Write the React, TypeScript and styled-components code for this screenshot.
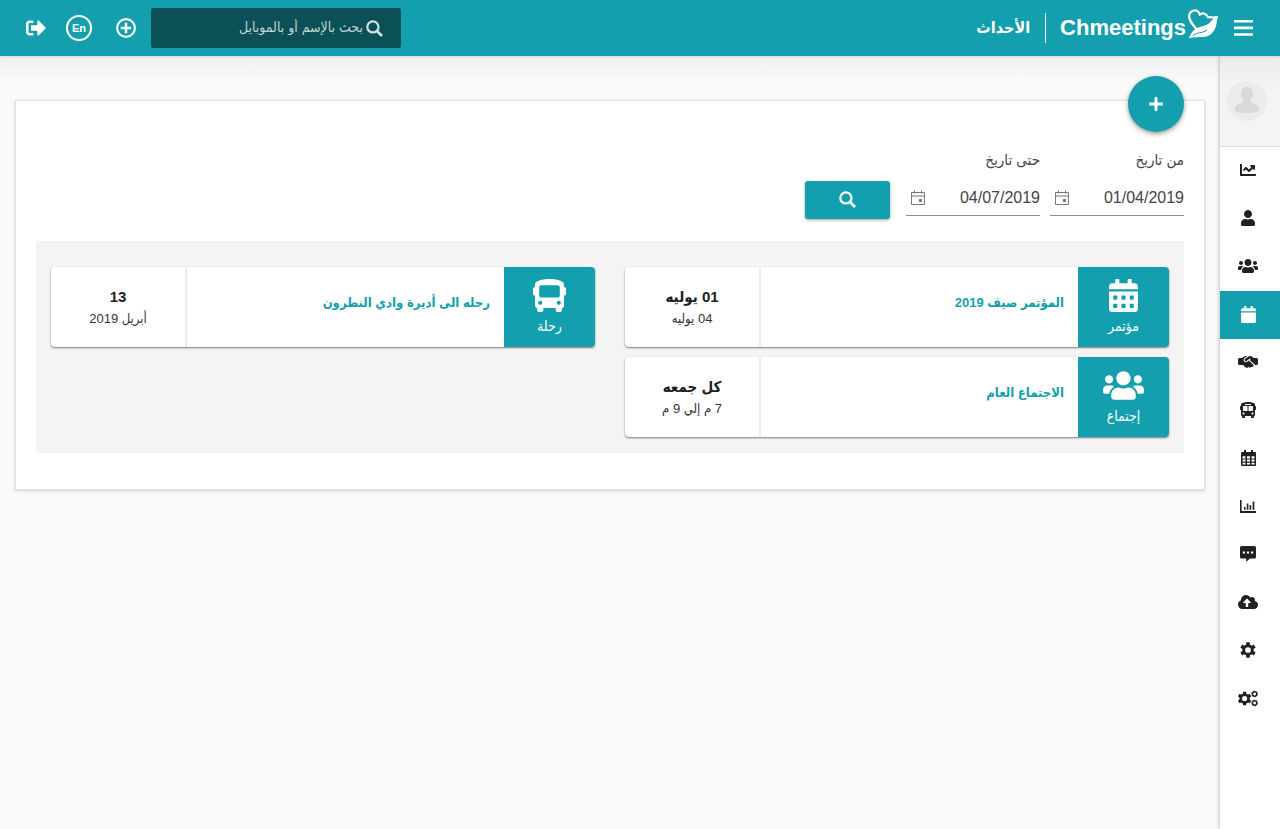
import React from "react";
import styled, { createGlobalStyle } from "styled-components";
import {
  FaBus,
  FaBusAlt,
  FaCalendar,
  FaCalendarAlt,
  FaChartLine,
  FaCloudUploadAlt,
  FaPlus,
  FaSignOutAlt,
  FaUser,
  FaUsers,
} from "react-icons/fa";
import { FaHandshakeSimple } from "react-icons/fa6";

const teal = "#139fad";

const GlobalStyle = createGlobalStyle`
  *, *::before, *::after { box-sizing: border-box; }
  body {
    margin: 0;
    background: #fafafa;
    color: #212121;
    font-family: "Liberation Sans", Arial, "DejaVu Sans Condensed", "DejaVu Sans", sans-serif;
    font-size: 14px;
    line-height: 20px;
  }
  button, input { font: inherit; color: inherit; }
  a { color: inherit; text-decoration: none; }
  svg { display: block; flex: none; }
`;

const Shell = styled.div`
  display: flex;
  flex-direction: column;
  min-height: 100vh;
`;

const TopBar = styled.header`
  position: relative;
  z-index: 2;
  display: flex;
  align-items: center;
  height: 56px;
  padding: 0 27px 0 26px;
  background: ${teal};
  color: #fff;
  box-shadow: 0 1px 2px rgba(0, 0, 0, 0.1);
`;

const IconButton = styled.button`
  display: flex;
  padding: 0;
  border: 0;
  background: none;
  color: #fff;
  cursor: pointer;
`;

const Brand = styled.a`
  display: flex;
  align-items: center;
  gap: 2px;
  margin-right: 15px;
`;

const BrandName = styled.span`
  font-size: 22px;
  font-weight: 700;
  line-height: 28px;
`;

const PageTitle = styled.h1`
  display: flex;
  align-items: center;
  height: 30px;
  margin: 0 14px 0 0;
  padding-right: 15px;
  border-right: 1px solid #fff;
  font-size: 16px;
  font-weight: 700;
`;

const Tools = styled.div`
  display: flex;
  align-items: center;
  gap: 15px;
  margin-right: auto;
`;

const Actions = styled.div`
  display: flex;
  align-items: center;
  gap: 20px;
`;

const SearchBox = styled.label`
  display: flex;
  align-items: center;
  gap: 3px;
  width: 250px;
  height: 40px;
  padding: 0 18px;
  border-radius: 2px;
  background: #0a5056;
  color: #d3dfe0;
`;

const SearchInput = styled.input`
  flex: 1;
  min-width: 0;
  padding: 0 0 2px;
  border: 0;
  outline: 0;
  background: none;
  font-size: 14px;
  &::placeholder { color: #c3d2d4; opacity: 1; }
`;

const LanguageButton = styled(IconButton)`
  align-items: center;
  justify-content: center;
  width: 26px;
  height: 26px;
  margin-right: 4px;
  border: 2px solid #fff;
  border-radius: 50%;
  font-size: 11px;
  font-weight: 700;
`;

const Body = styled.div`
  display: flex;
  flex: 1;
`;

const SideNav = styled.nav`
  position: relative;
  z-index: 1;
  flex: none;
  width: 60px;
  background: #fff;
  box-shadow: 0 0 4px rgba(0, 0, 0, 0.35);
`;

const Profile = styled.a`
  display: flex;
  align-items: center;
  justify-content: center;
  height: 91px;
  padding-right: 6px;
  border-bottom: 1px solid #dcdcdc;
  background: linear-gradient(#ebebeb, #f4f4f4 30px);
`;

const NavList = styled.ul`
  margin: 0;
  padding: 0;
  list-style: none;
`;

const NavLink = styled.a<{ $active?: boolean }>`
  display: flex;
  align-items: center;
  justify-content: center;
  height: 48px;
  padding: 0 4px 2px 0;
  background: ${(p) => (p.$active ? teal : "transparent")};
  color: ${(p) => (p.$active ? "#fff" : "#212121")};
`;

const Main = styled.main`
  flex: 1;
  min-width: 0;
  padding: 44px 15px;
  background: linear-gradient(#f0f0f0, #fafafa 24px);
`;

const Panel = styled.section`
  padding: 0 20px 36px;
  border: 1px solid #e2e2e2;
  background: #fff;
  box-shadow: 0 1px 3px rgba(0, 0, 0, 0.16);
`;

const AddButton = styled.button`
  display: flex;
  align-items: center;
  justify-content: center;
  width: 56px;
  height: 56px;
  margin-top: -25px;
  padding: 0;
  border: 0;
  border-radius: 50%;
  background: ${teal};
  color: #fff;
  box-shadow: 0 2px 5px rgba(0, 0, 0, 0.4);
  cursor: pointer;
`;

const Filters = styled.form`
  display: flex;
  align-items: flex-end;
  gap: 10px;
  margin: 18px 0 22px;
`;

const Field = styled.div`
  width: 134px;
  padding-bottom: 3px;
`;

const FieldLabel = styled.label`
  display: block;
  margin-bottom: 10px;
  font-size: 15px;
  color: #444;
`;

const DateBox = styled.div`
  display: flex;
  align-items: center;
  height: 36px;
  border-bottom: 1px solid #8d8d8d;
`;

const DateInput = styled.input`
  flex: 1;
  min-width: 0;
  padding: 0;
  border: 0;
  outline: 0;
  background: none;
  color: #444;
  font-size: 16px;
`;

const PickerButton = styled(IconButton)`
  margin-left: 4px;
  color: #777;
`;

const SubmitButton = styled.button`
  display: flex;
  align-items: center;
  justify-content: center;
  width: 85px;
  height: 38px;
  margin-right: 6px;
  padding: 0 0 2px;
  border: 0;
  border-radius: 3px;
  background: ${teal};
  color: #fff;
  box-shadow: 0 1px 3px rgba(0, 0, 0, 0.4);
  cursor: pointer;
`;

const EventGrid = styled.div`
  display: grid;
  grid-template-columns: 1fr 1fr;
  gap: 10px 30px;
  padding: 26px 15px 16px;
  background: #f4f4f4;
`;

const EventCard = styled.article`
  display: flex;
  height: 80px;
  overflow: hidden;
  border-radius: 4px;
  background: #fff;
  box-shadow: 0 1px 2px rgba(0, 0, 0, 0.5);
`;

const EventKind = styled.div`
  display: flex;
  flex-direction: column;
  align-items: center;
  gap: 4px;
  width: 91px;
  padding-top: 12px;
  background: ${teal};
  color: #fff;
  font-size: 14px;
`;

const KindIcon = styled.span`
  display: flex;
  align-items: center;
  height: 33px;
`;

const EventTitle = styled.a`
  flex: 1;
  padding: 26px 14px;
  color: ${teal};
  font-size: 13px;
  font-weight: 700;
`;

const EventWhen = styled.div`
  display: flex;
  flex-direction: column;
  align-items: center;
  gap: 2px;
  width: 136px;
  padding-top: 20px;
  border-right: 2px solid #ebebeb;
  font-size: 13px;
  color: #333;
`;

const WhenMain = styled.strong`
  font-size: 15px;
  color: #212121;
`;

const Magnifier = ({ size }: { size: number }) => (
  <svg width={size} height={size} viewBox="0 0 18 18" fill="none" stroke="currentColor" strokeWidth="2.4">
    <circle cx="7.3" cy="7.3" r="5.9" />
    <path d="M11.6 11.6 17 17" strokeWidth="2.8" />
  </svg>
);

const MenuIcon = () => (
  <svg width="19" height="16" viewBox="0 0 19 16" fill="currentColor">
    <path d="M0 0h19v2.600H0zM0 6.600h19v2.600H0zM0 13.200h19v2.600H0z" />
  </svg>
);

const BrandMark = () => (
  <svg width="31" height="38" viewBox="0 0 31 38">
    <path
      d="M8 19.500C4.500 15.500.2 11 1.300 5.800 2.300 1.600 7.500.2 10.200 2.800c.8.800 1.300 1.900 1.700 3 1.800-1.700 4-1.500 5.500-.6 1.100.7 1.900 1.700 2.300 3 2.700-.4 5.300 1.100 9-.200"
      fill="none"
      stroke="currentColor"
      strokeWidth="2.200"
      strokeLinecap="round"
      strokeLinejoin="round"
    />
    <path
      d="M.8 29.300C2.600 25.200 4.800 20.600 9.800 18.700c3.600-1.300 7.600-1.500 11-4.200 2-1.700 4-5.300 9.200-7.200-1.500 3.600-.6 7.200-2.800 11.900-2.300 5.200-6.400 8.300-11.600 8.700-4.800.3-9.600-.4-14.800 1.400z"
      fill="currentColor"
    />
    <path d="M4.800 26.200c4.800-3.200 9.200-1.800 14.200-5" fill="none" stroke={teal} strokeWidth="1" />
  </svg>
);

const PlusCircle = () => (
  <svg width="20" height="20" viewBox="0 0 20 20" fill="none" stroke="currentColor">
    <circle cx="10" cy="10" r="8.900" strokeWidth="2.100" />
    <path d="M10 4.800v10.400M4.800 10h10.400" strokeWidth="2.400" />
  </svg>
);

const PickerIcon = () => (
  <svg width="16" height="16" viewBox="0 0 16 16" fill="none" stroke="currentColor">
    <path d="M1.500 2.500h13v12h-13zM1.500 6h13M4.500.5v3M11.500.5v3" />
    <path d="M9 9h3v3H9z" fill="currentColor" stroke="none" />
  </svg>
);

const Avatar = () => (
  <svg width="40" height="40" viewBox="0 0 40 40">
    <circle cx="20" cy="20" r="20" fill="#ececec" />
    <path
      d="M20 6c3.700 0 5.900 2.700 5.900 6.400 0 3-1 5.200-2.400 6.800v2.600l5.600 1.700c1.900.6 2.900 2.100 2.900 4.200v2.100C32 31.100 27 32 20 32S8 31.100 8 29.800v-2.100c0-2.100 1-3.600 2.900-4.200l5.600-1.700v-2.600c-1.400-1.600-2.400-3.800-2.400-6.800C14.100 8.700 16.300 6 20 6z"
      fill="#d9d9d9"
    />
  </svg>
);

const GridCalendarIcon = () => (
  <svg width="15" height="16" viewBox="0 0 15 16">
    <path
      fill="currentColor"
      fillRule="evenodd"
      d="M3 0h2v2h5V0h2v2h2a1 1 0 0 1 1 1v12a1 1 0 0 1-1 1H1a1 1 0 0 1-1-1V3a1 1 0 0 1 1-1h2zM1.500 6.200v2.200h3V6.200zM6 6.200v2.200h3V6.200zM10.500 6.200v2.200h3V6.200zM1.500 9.600v2h3v-2zM6 9.600v2h3v-2zM10.500 9.600v2h3v-2zM1.500 12.800v1.700h3v-1.700zM6 12.800v1.700h3v-1.700zM10.500 12.800v1.700h3v-1.700z"
    />
  </svg>
);

const BarsIcon = () => (
  <svg width="16" height="13" viewBox="0 0 16 13" fill="currentColor">
    <path d="M0 0h1.600v11H16v2H0zM4 7h1.600v2.800H4zM6.800 3.500h1.600v6.300H6.800zM9.600 5h1.600v4.800H9.600zM12.600 1.500h1.700v8.300h-1.700z" />
  </svg>
);

const MessageIcon = () => (
  <svg width="16" height="16" viewBox="0 0 16 16">
    <path
      fill="currentColor"
      fillRule="evenodd"
      d="M1.500 0h13A1.500 1.500 0 0 1 16 1.500v9.600a1.500 1.500 0 0 1-1.500 1.500H10L6.200 15.800v-3.200H1.500A1.500 1.500 0 0 1 0 11.100V1.500A1.500 1.500 0 0 1 1.500 0zM2.800 5.400v2h2.200v-2zM6.900 5.400v2h2.200v-2zM11 5.400v2h2.200v-2z"
    />
  </svg>
);

const GearIcon = () => (
  <svg width="16" height="16" viewBox="-8 -8 16 16" fill="none" stroke="currentColor">
    <circle r="4.300" strokeWidth="2.900" />
    <g strokeWidth="3.600">
      <path d="M0-7.800V-5M0 5v2.800" />
      <path d="M0-7.800V-5M0 5v2.800" transform="rotate(60)" />
      <path d="M0-7.800V-5M0 5v2.800" transform="rotate(120)" />
    </g>
  </svg>
);

const SettingsGroupIcon = () => (
  <svg width="20" height="17" viewBox="0 0 20 17" fill="none" stroke="currentColor">
    <g transform="translate(6.600 8.500)">
      <circle r="3.900" strokeWidth="2.600" />
      <g strokeWidth="3.200">
        <path d="M0-6.800V-4.500M0 4.500v2.300" />
        <path d="M0-6.800V-4.500M0 4.500v2.300" transform="rotate(60)" />
        <path d="M0-6.800V-4.500M0 4.500v2.300" transform="rotate(120)" />
      </g>
    </g>
    <circle cx="16.600" cy="4" r="2.200" strokeWidth="1.500" />
    <circle cx="16.600" cy="13" r="2.200" strokeWidth="1.500" />
    <circle cx="16.600" cy="4" r="3" strokeWidth=".6" strokeDasharray="1.570 1.570" />
    <circle cx="16.600" cy="13" r="3" strokeWidth=".6" strokeDasharray="1.570 1.570" />
  </svg>
);

const navItems = [
  { label: "الإحصائيات", icon: <FaChartLine size={16} /> },
  { label: "الأعضاء", icon: <FaUser size={16} /> },
  { label: "المجموعات", icon: <FaUsers size={20} /> },
  { label: "الأحداث", icon: <FaCalendar size={17} />, active: true },
  { label: "المتابعة", icon: <FaHandshakeSimple size={20} /> },
  { label: "الرحلات", icon: <FaBusAlt size={16} /> },
  { label: "التقويم", icon: <GridCalendarIcon /> },
  { label: "التقارير", icon: <BarsIcon /> },
  { label: "الرسائل", icon: <MessageIcon /> },
  { label: "رفع الملفات", icon: <FaCloudUploadAlt size={20} /> },
  { label: "الإعدادات", icon: <GearIcon /> },
  { label: "إعدادات متقدمة", icon: <SettingsGroupIcon /> },
];

const events = [
  { kind: "مؤتمر", icon: <FaCalendarAlt size={33} />, title: "المؤتمر صيف 2019", main: "01 يوليه", sub: "04 يوليه" },
  { kind: "رحلة", icon: <FaBus size={33} />, title: "رحله الى أديرة وادي النطرون", main: "13", sub: "أبريل 2019" },
  { kind: "إجتماع", icon: <FaUsers size={41} />, title: "الاجتماع العام", main: "كل جمعه", sub: "7 م إلي 9 م" },
];

const DateField = ({ id, label, value }: { id: string; label: string; value: string }) => (
  <Field>
    <FieldLabel htmlFor={id}>{label}</FieldLabel>
    <DateBox>
      <DateInput id={id} type="text" defaultValue={value} />
      <PickerButton type="button" aria-label={label}>
        <PickerIcon />
      </PickerButton>
    </DateBox>
  </Field>
);

export default function App() {
  return (
    <Shell dir="rtl" lang="ar">
      <GlobalStyle />
      <TopBar>
        <IconButton type="button" aria-label="القائمة">
          <MenuIcon />
        </IconButton>
        <Brand href="#" dir="ltr">
          <BrandName>Chmeetings</BrandName>
          <BrandMark />
        </Brand>
        <PageTitle>الأحداث</PageTitle>
        <Tools>
          <SearchBox>
            <Magnifier size={17} />
            <SearchInput type="text" aria-label="بحث" placeholder="بحث بالإسم أو بالموبايل" />
          </SearchBox>
          <Actions>
            <IconButton type="button" aria-label="إضافة">
              <PlusCircle />
            </IconButton>
            <LanguageButton type="button">En</LanguageButton>
            <IconButton type="button" aria-label="خروج">
              <FaSignOutAlt size={20} />
            </IconButton>
          </Actions>
        </Tools>
      </TopBar>
      <Body>
        <SideNav>
          <Profile href="#" aria-label="الملف الشخصي">
            <Avatar />
          </Profile>
          <NavList>
            {navItems.map((item) => (
              <li key={item.label}>
                <NavLink href="#" aria-label={item.label} $active={item.active}>
                  {item.icon}
                </NavLink>
              </li>
            ))}
          </NavList>
        </SideNav>
        <Main>
          <Panel>
            <AddButton type="button" aria-label="إضافة حدث">
              <FaPlus size={16} />
            </AddButton>
            <Filters>
              <DateField id="from" label="من تاريخ" value="01/04/2019" />
              <DateField id="to" label="حتى تاريخ" value="04/07/2019" />
              <SubmitButton type="button" aria-label="بحث">
                <Magnifier size={17} />
              </SubmitButton>
            </Filters>
            <EventGrid>
              {events.map((event) => (
                <EventCard key={event.title}>
                  <EventKind>
                    <KindIcon>{event.icon}</KindIcon>
                    <span>{event.kind}</span>
                  </EventKind>
                  <EventTitle href="#">{event.title}</EventTitle>
                  <EventWhen>
                    <WhenMain>{event.main}</WhenMain>
                    <span>{event.sub}</span>
                  </EventWhen>
                </EventCard>
              ))}
            </EventGrid>
          </Panel>
        </Main>
      </Body>
    </Shell>
  );
}
